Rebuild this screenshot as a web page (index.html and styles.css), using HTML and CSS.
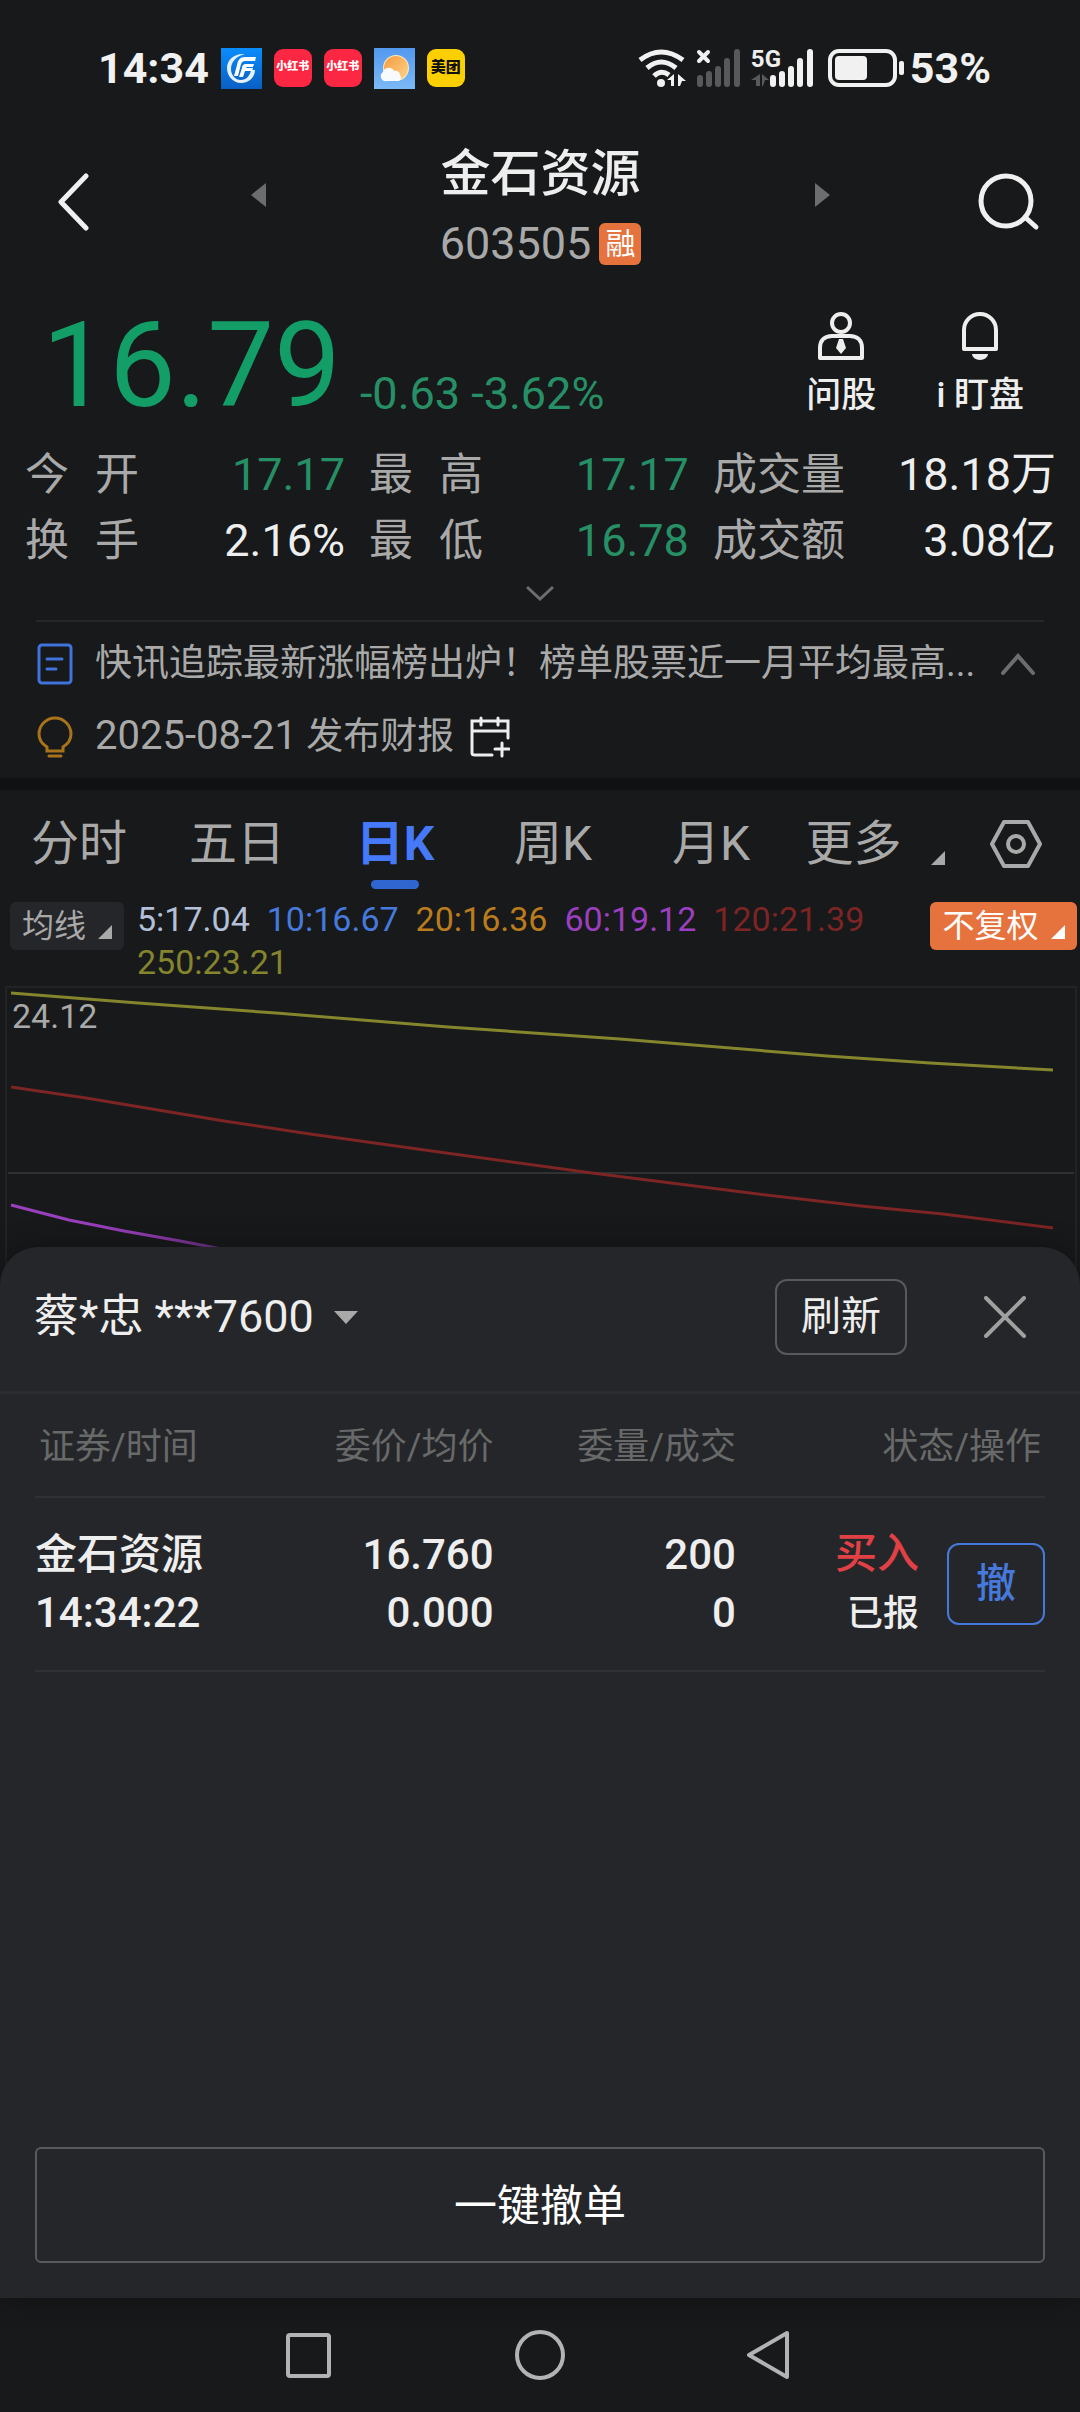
FILE: index.html
```html
<!DOCTYPE html>
<html lang="zh-CN">
<head>
<meta charset="utf-8">
<meta name="viewport" content="width=device-width">
<title>金石资源 603505</title>
<link rel="stylesheet" href="styles.css">
</head>
<body>
<div class="app">
  <div class="statusbar">
    <div class="status-left">
      <span class="clock">14:34</span>
      <svg class="app-square" viewBox="0 0 41 41" aria-hidden="true">
        <defs><linearGradient id="gf" x1="0" y1="0" x2="0" y2="1"><stop offset="0" stop-color="#0a8dfb"/><stop offset="1" stop-color="#0a5fc4"/></linearGradient></defs>
        <rect width="41" height="41" fill="url(#gf)"/>
        <path d="M24 6C13 5 6 12 6 20c0 8 6 15 14 15 8 0 14-6 14-13h-4c-1 6-5 10-10 10-6 0-10-5-10-11C10 14 15 8 24 6z" fill="#e6f1ff"/>
        <path d="M35 9H24c-5 0-7 3-8 8l-3 11h4l3-12c1-2 2-3 4-3h10z" fill="#fff"/>
        <path d="M33 16h-8c-3 0-4 2-4 4l-3 9h4l2-6h7l1-3h-7c0-1 1-1 2-1h5z" fill="#fff"/>
      </svg>
      <span class="app-tile red">小红书</span>
      <span class="app-tile red">小红书</span>
      <svg class="app-square" viewBox="0 0 41 41" aria-hidden="true">
        <defs>
          <linearGradient id="gs" x1="0" y1="0" x2="0" y2="1"><stop offset="0" stop-color="#5298ee"/><stop offset="1" stop-color="#7cb9f7"/></linearGradient>
          <linearGradient id="gu" x1="0" y1="0" x2="1" y2="1"><stop offset="0" stop-color="#f79a3c"/><stop offset="1" stop-color="#fbd58b"/></linearGradient>
        </defs>
        <rect width="41" height="41" fill="url(#gs)"/>
        <circle cx="22" cy="20" r="13" fill="#ffe9c0"/>
        <circle cx="22" cy="20" r="12" fill="url(#gu)"/>
        <path d="M13 33a5 5 0 0 1-4-9 6 6 0 0 1 11-1c3-1 6 1 6 4 2 2 1 6-2 6z" fill="#f8fafd"/>
      </svg>
      <span class="app-tile yellow">美团</span>
    </div>
    <div class="status-right">
      <svg class="wifi" viewBox="0 0 48 38" fill="none" stroke="#f1f1f1" stroke-width="5" aria-hidden="true">
        <path d="M2 11Q23-5 45 11"/><path d="M9 19Q23 7 38 19"/><path d="M16 27Q23 20 31 26"/>
        <circle cx="23" cy="34" r="4" fill="#f1f1f1" stroke="none"/>
        <path d="M36 25v12h-3v-6h-4zM40 37v-12l8 7h-4l-2 5z" fill="#f1f1f1" stroke="none"/>
      </svg>
      <svg class="signal-off" viewBox="0 0 45 38" aria-hidden="true">
        <path d="M3 3l9 9M12 3l-9 9" stroke="#f1f1f1" stroke-width="4" stroke-linecap="round"/>
        <path d="M4 29v6M13 25v10M22 20v15M31 12v23M41 3v32" stroke="#58595b" stroke-width="6" stroke-linecap="round"/>
      </svg>
      <span class="signal">
        <svg viewBox="0 0 63 38" aria-hidden="true">
          <path d="M9 25v12H5v-6H0zM11 37V25l7 6h-4l-2 6z" fill="#58595b"/>
          <path d="M22 29v6M31 25v10M40 20v15M49 12v23M59 3v32" stroke="#f1f1f1" stroke-width="6" stroke-linecap="round"/>
        </svg>
        <span class="net">5G</span>
      </span>
      <svg class="battery" viewBox="0 0 76 38" aria-hidden="true">
        <rect x="2" y="2" width="65" height="34" rx="9" fill="none" stroke="#f1f1f1" stroke-width="4"/>
        <rect x="7" y="7" width="32" height="24" rx="4" fill="#f1f1f1"/>
        <rect x="71" y="12" width="5" height="14" rx="2" fill="#f1f1f1"/>
      </svg>
      <span class="clock">53%</span>
    </div>
  </div>

  <header class="titlebar">
    <button class="icon-btn" aria-label="返回"><svg width="32" height="58" viewBox="0 0 32 58"><path d="M29 3L4 29l25 26" fill="none" stroke="#f0f0f0" stroke-width="5" stroke-linecap="round" stroke-linejoin="round"/></svg></button>
    <div class="switcher">
      <button class="icon-btn" aria-label="上一只"><svg width="15" height="24" viewBox="0 0 15 24"><path d="M15 0v24L0 12z" fill="#6c6d6e"/></svg></button>
      <div class="stock">
        <h1>金石资源</h1>
        <div class="code"><span>603505</span><span class="badge">融</span></div>
      </div>
      <button class="icon-btn" aria-label="下一只"><svg width="15" height="24" viewBox="0 0 15 24"><path d="M0 0v24l15-12z" fill="#6c6d6e"/></svg></button>
    </div>
    <button class="icon-btn" aria-label="搜索"><svg width="62" height="58" viewBox="0 0 62 58"><circle cx="28" cy="28" r="25" fill="none" stroke="#f0f0f0" stroke-width="5"/><path d="M48 45l10 9" stroke="#f0f0f0" stroke-width="5" stroke-linecap="round"/></svg></button>
  </header>

  <section class="quote">
    <div class="price-row">
      <span class="price">16.79</span>
      <span class="change">-0.63 -3.62%</span>
      <button class="tool">
        <svg width="46" height="48" viewBox="0 0 46 48" fill="none" stroke="#eee" stroke-width="4"><circle cx="23" cy="11" r="9"/><path d="M2 46V36C2 28 7 24 14 24h18c7 0 12 4 12 12v10z" stroke-linejoin="round"/><path d="M21 27h4l3 9-5 6-5-6z" fill="#eee" stroke="none"/></svg>
        <span>问股</span>
      </button>
      <button class="tool">
        <svg width="36" height="48" viewBox="0 0 36 48"><path d="M2 37V18a16 16 0 0 1 32 0v19z" fill="none" stroke="#eee" stroke-width="4" stroke-linejoin="round"/><path d="M10 42h16a8 6 0 0 1-16 0z" fill="#eee"/></svg>
        <span>i 盯盘</span>
      </button>
    </div>
    <dl class="stats">
      <div><dt><span>今</span><span>开</span></dt><dd class="down">17.17</dd></div>
      <div><dt><span>最</span><span>高</span></dt><dd class="down">17.17</dd></div>
      <div><dt>成交量</dt><dd>18.18万</dd></div>
      <div><dt><span>换</span><span>手</span></dt><dd>2.16%</dd></div>
      <div><dt><span>最</span><span>低</span></dt><dd class="down">16.78</dd></div>
      <div><dt>成交额</dt><dd>3.08亿</dd></div>
    </dl>
    <button class="icon-btn expand" aria-label="展开"><svg width="28" height="16" viewBox="0 0 28 16"><path d="M1 2l13 12L27 2" fill="none" stroke="#6c6d6e" stroke-width="3"/></svg></button>
  </section>

  <section class="news">
    <a class="news-row" href="#">
      <svg width="36" height="42" viewBox="0 0 36 42" fill="none" stroke="#4173dc" stroke-width="3" stroke-linecap="round"><rect x="2" y="2" width="32" height="38" rx="3"/><path d="M10 16h15M10 26h9"/></svg>
      <span class="news-text">快讯追踪最新涨幅榜出炉！榜单股票近一月平均最高...</span>
      <svg width="34" height="22" viewBox="0 0 34 22"><path d="M2 20L17 3l15 17" fill="none" stroke="#6c6d6e" stroke-width="4" stroke-linecap="round"/></svg>
    </a>
    <a class="news-row" href="#">
      <svg width="36" height="42" viewBox="0 0 36 42" fill="none" stroke="#a8731a" stroke-width="3" stroke-linecap="round"><path d="M10 35v-4C5 28 2 24 2 18a16 16 0 0 1 32 0c0 6-3 10-8 13v4zM12 40h12"/></svg>
      <span><time>2025-08-21</time> 发布财报</span>
      <svg class="calendar" width="40" height="42" viewBox="0 0 40 42" fill="none" stroke="#eee" stroke-width="3" stroke-linecap="round"><path d="M38 22V5H2v32q0 2 3 2h17M2 15h36M11 2v7M28 2v7M32 27v13M25 33h14"/></svg>
    </a>
  </section>

  <nav class="tabs">
    <button>分时</button>
    <button>五日</button>
    <button class="active">日K</button>
    <button>周K</button>
    <button>月K</button>
    <button class="more">更多<svg width="14" height="14" viewBox="0 0 14 14"><path d="M14 0v14H0z" fill="#a9a9a9"/></svg></button>
    <button class="gear" aria-label="设置"><svg width="52" height="48" viewBox="0 0 52 48" fill="none" stroke="#a9a9a9" stroke-width="4"><path d="M14 2h24l12 22-12 22H14L2 24z" stroke-linejoin="round"/><circle cx="26" cy="24" r="8"/></svg></button>
  </nav>

  <div class="ma">
    <button class="chip">均线<svg width="14" height="14" viewBox="0 0 14 14"><path d="M14 0v14H0z" fill="#a9a9a9"/></svg></button>
    <div class="ma-values">
      <span class="m5">5:17.04</span><span class="m10">10:16.67</span><span class="m20">20:16.36</span><span class="m60">60:19.12</span><span class="m120">120:21.39</span><span class="m250">250:23.21</span>
    </div>
    <button class="chip accent">不复权<svg width="14" height="14" viewBox="0 0 14 14"><path d="M14 0v14H0z" fill="#fff"/></svg></button>
  </div>

  <div class="chart">
    <svg viewBox="0 0 1068 300" preserveAspectRatio="none" fill="none" stroke-width="3" aria-hidden="true">
      <path d="M1 185H1067" stroke="#303133" stroke-width="2"/>
      <path d="M4 5L131 15L269 25L441 39L613 51L820 68L923 75L1046 82" stroke="#84852c"/>
      <path d="M4 99L79 110L217 133L303 146L432 164L585 185L751 206L854 218L936 226L1046 240" stroke="#7d2424"/>
      <path d="M4 217L62 232L117 243L173 253L220 262" stroke="#9a3fbe"/>
    </svg>
    <span class="axis">24.12</span>
  </div>

  <section class="sheet">
    <div class="sheet-head">
      <label class="account">
        <select aria-label="账户"><option>蔡*忠 ***7600</option></select>
        <svg width="24" height="13" viewBox="0 0 24 13"><path d="M0 0h24L12 13z" fill="#a9a9a9"/></svg>
      </label>
      <button class="refresh">刷新</button>
      <button class="icon-btn" aria-label="关闭"><svg width="42" height="42" viewBox="0 0 42 42"><path d="M2 2l38 38M40 2L2 40" stroke="#a0a0a1" stroke-width="4" stroke-linecap="round"/></svg></button>
    </div>
    <table class="orders">
      <colgroup><col class="c-name"><col class="c-price"><col class="c-qty"><col class="c-state"></colgroup>
      <thead><tr><th>证券/时间</th><th>委价/均价</th><th>委量/成交</th><th>状态/操作</th></tr></thead>
      <tbody><tr>
        <td>金石资源<br>14:34:22</td>
        <td>16.760<br>0.000</td>
        <td>200<br>0</td>
        <td><div class="state"><div><span class="buy">买入</span><br><span class="reported">已报</span></div><button class="cancel">撤</button></div></td>
      </tr></tbody>
    </table>
    <button class="cancel-all">一键撤单</button>
  </section>

  <nav class="sysnav">
    <button class="icon-btn" aria-label="最近任务"><svg width="50" height="50" viewBox="0 0 50 50"><rect x="4" y="5" width="41" height="41" rx="2" fill="none" stroke="#b3b3b3" stroke-width="4"/></svg></button>
    <button class="icon-btn" aria-label="主屏幕"><svg width="50" height="50" viewBox="0 0 50 50"><circle cx="25" cy="25" r="23" fill="none" stroke="#b3b3b3" stroke-width="4"/></svg></button>
    <button class="icon-btn" aria-label="返回"><svg width="50" height="50" viewBox="0 0 50 50"><path d="M41 3v44L3 25z" fill="none" stroke="#b3b3b3" stroke-width="4" stroke-linejoin="round"/></svg></button>
  </nav>
</div>
</body>
</html>
```

FILE: styles.css
```css
* { box-sizing: border-box; }

body {
  margin: 0;
  background: #17191a;
  color: #eee;
  font-family: Roboto, "Noto Sans CJK SC", sans-serif;
}

button, select {
  margin: 0;
  padding: 0;
  border: 0;
  background: none;
  color: inherit;
  font: inherit;
}

a { color: inherit; text-decoration: none; }
svg { display: block; flex: none; }

.app {
  display: flex;
  flex-direction: column;
  min-height: 100vh;
}

.icon-btn {
  display: flex;
  align-items: center;
  justify-content: center;
}

/* status bar */
.statusbar {
  display: flex;
  align-items: center;
  justify-content: space-between;
  height: 136px;
  padding: 0 89px 0 98px;
}

.status-left, .status-right { display: flex; align-items: center; }
.status-left { gap: 12px; }
.status-right { gap: 10px; }

.clock {
  font-size: 43px;
  line-height: 48px;
  font-weight: 700;
  color: #f1f1f1;
}

.app-square { width: 41px; height: 41px; }

.app-tile {
  width: 38px;
  height: 38px;
  border-radius: 9px;
  font-weight: 900;
  line-height: 36px;
  text-align: center;
}

.red { background: #fc2742; color: #fff; font-size: 11px; }
.yellow { background: #fcd000; color: #111; font-size: 15px; }

.wifi { width: 48px; height: 38px; }
.signal-off { width: 45px; height: 38px; }
.signal { position: relative; width: 63px; height: 38px; margin-right: 4px; }
.signal svg { width: 63px; height: 38px; }
.net {
  position: absolute;
  left: 0;
  top: -2px;
  font-size: 24px;
  line-height: 24px;
  font-weight: 700;
}
.battery { width: 76px; height: 38px; margin-right: -4px; }

/* title bar */
.titlebar {
  display: flex;
  align-items: center;
  justify-content: space-between;
  height: 132px;
  padding: 0 40px 0 57px;
}

.switcher {
  display: flex;
  flex: 1;
  align-items: center;
  justify-content: space-between;
  padding: 0 148px 0 162px;
}

.switcher .icon-btn { margin-bottom: 14px; }

.stock { padding-top: 12px; text-align: center; }

.stock h1 {
  margin: 0;
  font-size: 50px;
  line-height: 72px;
  font-weight: 500;
}

.code {
  display: flex;
  align-items: center;
  gap: 8px;
  font-size: 45px;
  line-height: 68px;
  color: #a9a9a9;
}

.badge {
  width: 42px;
  height: 42px;
  border-radius: 6px;
  background: #e6733e;
  color: #fff;
  font-size: 30px;
  line-height: 42px;
  text-align: center;
}

/* quote */
.price-row {
  display: flex;
  align-items: flex-end;
  height: 152px;
  padding: 0 56px 0 42px;
}

.price {
  font-size: 119px;
  line-height: 108px;
  color: #139e68;
}

.change {
  margin: 0 auto 0 19px;
  font-size: 45px;
  line-height: 52px;
  color: #278f66;
}

.tool {
  display: flex;
  flex-direction: column;
  align-items: center;
  gap: 12px;
  margin-left: 60px;
  font-size: 35px;
  line-height: 48px;
  font-weight: 500;
}

.stats {
  display: grid;
  grid-template-columns: 318fr 318fr 341fr;
  column-gap: 24px;
  margin: 0;
  padding: 22px 24px 0 25px;
  font-size: 44px;
  line-height: 66px;
}

.stats div { display: flex; justify-content: space-between; }
.stats dt { display: flex; gap: 26px; color: #a9a9a9; }
.stats dd { margin: 0; font-size: 45px; }
.stats .down { color: #278f66; }

.expand { width: 100%; height: 46px; padding-bottom: 8px; }

/* news */
.news {
  margin: 0 36px;
  padding: 5px 0 5px;
  border-top: 2px solid #26272a;
}

.news-row {
  display: flex;
  align-items: center;
  gap: 22px;
  height: 73px;
  padding: 0 9px 0 1px;
  font-size: 37px;
  line-height: 48px;
  color: #a9a9a9;
}

.news-row time { font-size: 40px; }
.news-row .calendar { margin-left: -6px; }
.news-text { flex: 1; }

/* period tabs */
.tabs {
  display: grid;
  grid-template-columns: repeat(5, 158fr) 170fr 120fr;
  border-top: 12px solid #101113;
}

.tabs button {
  position: relative;
  height: 106px;
  padding-top: 2px;
  font-size: 48px;
  line-height: 72px;
  color: #a9a9a9;
}

.tabs .active { color: #4679f8; font-weight: 700; }

.tabs .active::after {
  content: "";
  position: absolute;
  left: calc(50% - 24px);
  bottom: 7px;
  width: 48px;
  height: 9px;
  border-radius: 5px;
  background: #2f66d0;
}

.tabs .more {
  display: flex;
  align-items: center;
  justify-content: center;
  gap: 29px;
}

.more svg { margin-top: 28px; }
.tabs .gear { display: flex; align-items: center; padding-left: 30px; }

/* moving averages */
.ma {
  display: flex;
  align-items: flex-start;
  padding: 6px 3px 0 10px;
  color: #a9a9a9;
}

.chip {
  display: flex;
  flex: none;
  align-items: center;
  justify-content: center;
  gap: 12px;
  width: 114px;
  height: 48px;
  border-radius: 6px;
  background: #25262a;
  font-size: 32px;
  line-height: 48px;
}

.chip svg { margin-top: 12px; }
.chip.accent { width: 147px; background: #e6733e; color: #fff; }

.ma-values {
  display: flex;
  flex: 1;
  flex-wrap: wrap;
  gap: 0 17px;
  padding-left: 13px;
  margin-top: -4px;
  font-size: 34px;
  line-height: 43px;
}

.m5 { color: #b4c0d8; }
.m10 { color: #4679dc; }
.m20 { color: #ba7c1c; }
.m60 { color: #9a3fbe; }
.m120 { color: #7d2424; }
.m250 { color: #84852c; }

/* chart */
.chart {
  position: relative;
  height: 300px;
  margin: 2px 3px 0 5px;
  border: 2px solid #222325;
  border-bottom: 0;
}

.chart svg { width: 100%; height: 300px; }

.axis {
  position: absolute;
  left: 5px;
  top: 7px;
  font-size: 34px;
  line-height: 43px;
  color: #a9a9a9;
}

/* order sheet */
.sheet {
  position: relative;
  display: flex;
  flex: 1;
  flex-direction: column;
  margin-top: -39px;
  border-radius: 38px 38px 0 0;
  background: #25262a;
  box-shadow: 0 0 24px #111213;
}

.sheet-head {
  display: flex;
  align-items: center;
  height: 147px;
  padding: 0 54px 4px 34px;
  border-bottom: 3px solid #2b2c2f;
}

.account {
  display: flex;
  align-items: center;
  gap: 20px;
  margin-right: auto;
  font-size: 45px;
  line-height: 60px;
}

.account select { appearance: none; height: 60px; }

.refresh {
  width: 132px;
  height: 76px;
  margin-right: 77px;
  border: 2px solid #58595b;
  border-radius: 12px;
  font-size: 40px;
  line-height: 60px;
}

.orders {
  margin: 0 35px;
  border-collapse: collapse;
  table-layout: fixed;
}

.c-name, .c-price { width: 23%; }
.c-qty { width: 24%; }
.c-state { width: 30%; }

.orders tr { border-bottom: 2px solid #303133; }
.orders th, .orders td { padding: 0 6px 0 0; text-align: right; }
.orders th:first-child, .orders td:first-child { text-align: left; }

.orders th {
  height: 103px;
  padding-bottom: 4px;
  font-size: 36px;
  font-weight: 400;
  color: #686969;
}

.orders th:first-child { padding-left: 4px; }
.orders th:last-child { padding-right: 4px; }

.orders td {
  height: 174px;
  font-size: 42px;
  line-height: 58px;
  font-weight: 500;
}

.orders td:last-child { padding-right: 0; }

.state {
  display: flex;
  align-items: center;
  justify-content: flex-end;
  gap: 28px;
}

.buy { color: #e14145; }
.reported { font-size: 36px; }

.cancel {
  width: 98px;
  height: 82px;
  border: 2px solid #4679dc;
  border-radius: 12px;
  color: #4679dc;
  font-size: 40px;
  line-height: 60px;
}

.cancel-all {
  height: 116px;
  margin: auto 35px 35px;
  padding-top: 2px;
  border: 2px solid #58595b;
  border-radius: 6px;
  color: #fff;
  font-size: 43px;
  line-height: 60px;
}

/* system navigation */
.sysnav {
  display: flex;
  align-items: center;
  justify-content: center;
  gap: 181px;
  height: 114px;
}
```
